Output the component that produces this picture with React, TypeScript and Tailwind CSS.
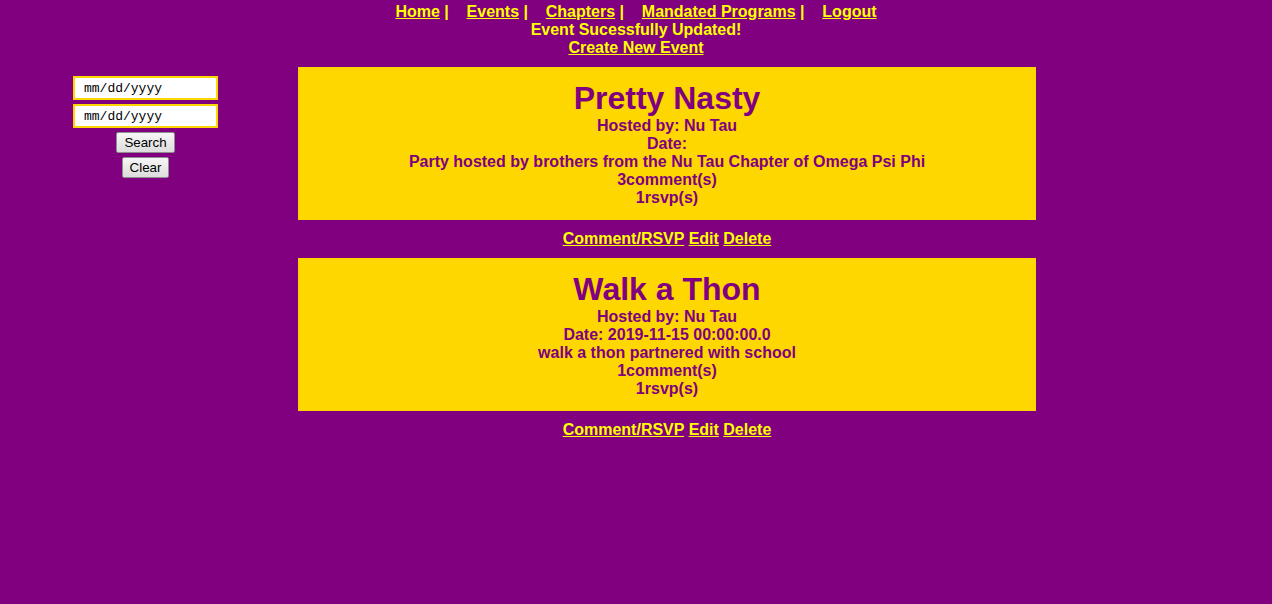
import React from 'react';

type EventItem = {
  title: string;
  host: string;
  date: string;
  description: string;
  comments: number;
  rsvps: number;
};

const events: EventItem[] = [
  {
    title: 'Pretty Nasty',
    host: 'Nu Tau',
    date: '',
    description: 'Party hosted by brothers from the Nu Tau Chapter of Omega Psi Phi',
    comments: 3,
    rsvps: 1,
  },
  {
    title: 'Walk a Thon',
    host: 'Nu Tau',
    date: '2019-11-15 00:00:00.0',
    description: 'walk a thon partnered with school',
    comments: 1,
    rsvps: 1,
  },
];

const navLinks = ['Home', 'Events', 'Chapters', 'Mandated Programs', 'Logout'];

const DateBox = () => (
  <div className="w-[145px] h-[24px] border-2 border-[#ffd700] bg-white flex items-center pl-[9px] pt-[2px] text-[13px] text-black font-['Liberation_Mono',monospace]">
    mm/dd/yyyy
  </div>
);

const Btn = ({ label }: { label: string }) => (
  <button className="h-[21px] px-[7px] border border-[#8f8f8f] rounded-[2px] bg-gradient-to-b from-[#f6f6f6] to-[#dddddd] text-[13.33px] leading-none text-black">
    {label}
  </button>
);

const EventCard = ({ ev }: { ev: EventItem }) => (
  <div>
    <div className="bg-[#ffd700] text-[#800080] text-center pt-[13px] pb-[13px]">
      <div className="text-[32px] leading-[37px] font-bold">{ev.title}</div>
      <div className="text-[16px] leading-[18px] font-bold">
        <div>Hosted by: {ev.host}</div>
        <div>Date: {ev.date}</div>
        <div>{ev.description}</div>
        <div>{ev.comments}comment(s)</div>
        <div>{ev.rsvps}rsvp(s)</div>
      </div>
    </div>
    <div className="text-center pt-[10px] pb-[10px] text-[16px] leading-[18px] font-bold text-[#ffff00]">
      <a href="#" className="underline">Comment/RSVP</a>{' '}
      <a href="#" className="underline">Edit</a>{' '}
      <a href="#" className="underline">Delete</a>
    </div>
  </div>
);

export default function App() {
  return (
    <div className="min-h-screen w-full bg-[#800080] font-['Liberation_Sans',Arial,sans-serif]">
      <div className="pt-[3px] text-center text-[16px] leading-[18px] font-bold text-[#ffff00]">
        <div className="whitespace-pre">
          {navLinks.map((l, i) => (
            <span key={l}>
              <a href="#" className="underline">{l}</a>
              {i < navLinks.length - 1 ? ' |    ' : ''}
            </span>
          ))}
        </div>
        <div>Event Sucessfully Updated!</div>
        <div>
          <a href="#" className="underline">Create New Event</a>
        </div>
      </div>

      <div className="flex mt-[10px]">
        <div className="w-[291px] flex flex-col items-center gap-[4px] pt-[9px]">
          <DateBox />
          <DateBox />
          <Btn label="Search" />
          <Btn label="Clear" />
        </div>
        <div className="w-[738px] ml-[7px]">
          {events.map((ev) => (
            <EventCard key={ev.title} ev={ev} />
          ))}
        </div>
      </div>
    </div>
  );
}
